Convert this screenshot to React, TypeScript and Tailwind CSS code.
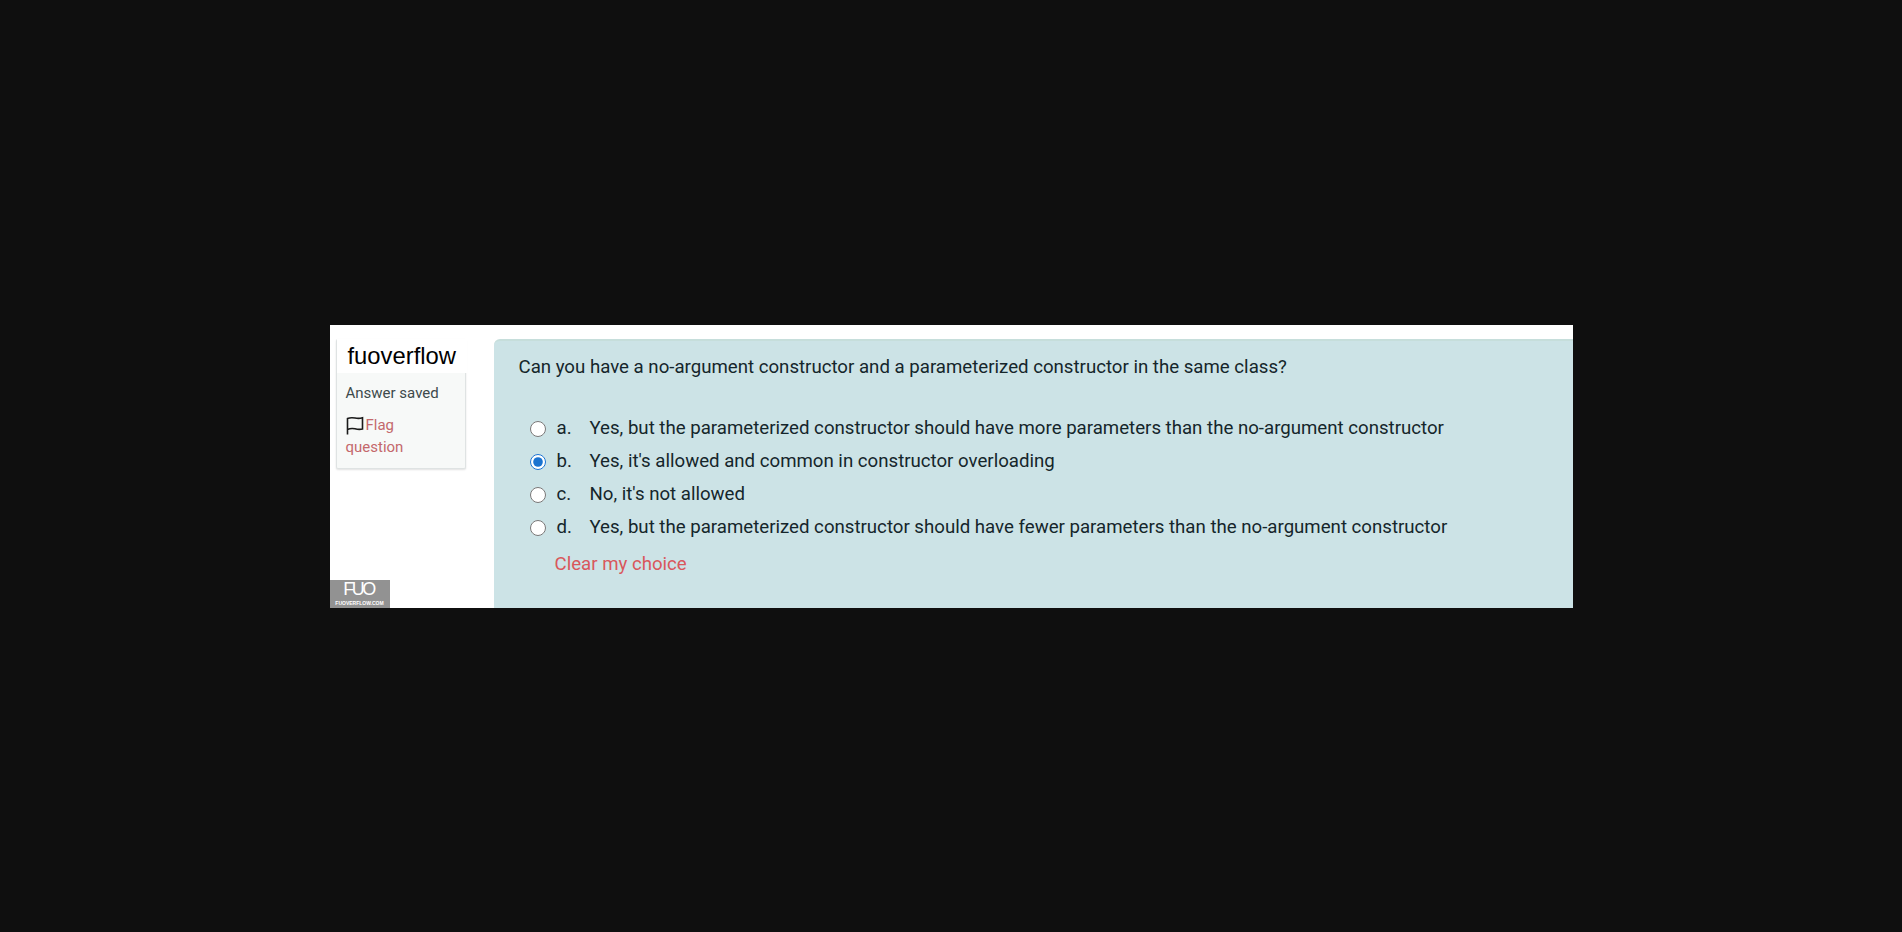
const options = [
  { letter: "a.", text: "Yes, but the parameterized constructor should have more parameters than the no-argument constructor", checked: false },
  { letter: "b.", text: "Yes, it's allowed and common in constructor overloading", checked: true },
  { letter: "c.", text: "No, it's not allowed", checked: false },
  { letter: "d.", text: "Yes, but the parameterized constructor should have fewer parameters than the no-argument constructor", checked: false },
];

const FlagIcon = () => (
  <svg width="18" height="19" viewBox="0 0 18 19" fill="none" stroke="#1a1a1a" strokeWidth="1.6" className="inline-block align-[-5px] mr-[2px]">
    <path d="M1.5 18.5V2.5C4 1.5 6.5 1.5 9 2C11.5 2.5 14 2.5 16.5 1.8V13C14 13.6 11.5 13.4 9 12.8C6.5 12.3 4 12.4 1.5 13.4" />
  </svg>
);

const Sidebar = () => (
  <div className="w-[164px] shrink-0 pl-[6px] pt-[14px]">
    <div className="w-[130px] h-[130px] rounded-[2px] bg-[#f7f9f8] border-l border-b border-r border-[#dfe3e3] shadow-[0_1px_2px_rgba(0,0,0,0.12)]">
      <div className="h-[34px] -mr-[2px] bg-white pl-[11px] text-[23.8px] leading-[34px] text-black font-['Liberation_Sans',sans-serif]">
        fuoverflow
      </div>
      <div className="pl-[9px] pt-[9px] text-[15px] leading-[22px] text-[#3d4a4c]">
        <div>Answer saved</div>
        <div className="mt-[10px] text-[#c4686c]">
          <FlagIcon />
          Flag
          <br />
          question
        </div>
      </div>
    </div>
  </div>
);

const Watermark = () => (
  <div className="absolute left-0 bottom-0 w-[60px] h-[28px] bg-[#929292] flex flex-col items-center text-white">
    <div className="text-[18px] leading-[19px] tracking-[-2.5px] pr-[2px] font-['Liberation_Sans',sans-serif]">FUO</div>
    <div className="text-[5px] leading-[8px] font-bold font-['Liberation_Sans',sans-serif] whitespace-nowrap">FUOVERFLOW.COM</div>
  </div>
);

const App = () => {
  return (
    <div className="h-[932px] w-full bg-[#0f0f0f] flex items-center justify-center font-['Roboto',sans-serif]">
      <div className="relative w-[1243px] h-[283px] bg-white flex overflow-hidden">
        <Sidebar />
        <div className="flex-1 mt-[14px] pl-[25px] pt-[13px] bg-[#cce3e6] border-t-2 border-[#c6dedb] rounded-tl-[6px] text-[#15262b]">
          <div className="text-[18.65px] leading-[26px]">
            Can you have a no-argument constructor and a parameterized constructor in the same class?
          </div>
          <div className="mt-[33px] pl-[11px] flex flex-col">
            {options.map((o) => (
              <div key={o.letter} className="h-[33px] flex items-center text-[18.65px]">
                <input type="radio" checked={o.checked} readOnly className="w-[16px] h-[16px] m-0 accent-[#1a73d0]" />
                <span className="w-[33px] ml-[3px] pl-[8px] box-content">{o.letter}</span>
                <span>{o.text}</span>
              </div>
            ))}
          </div>
          <div className="mt-[6px] pl-[36px] text-[18.65px] leading-[26px] text-[#d9575c]">Clear my choice</div>
        </div>
        <Watermark />
      </div>
    </div>
  );
};

export default App;
